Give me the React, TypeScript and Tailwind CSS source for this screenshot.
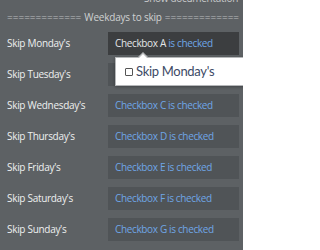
import React from "react";

const rows = [
  { label: "Skip Monday's", letter: "A" },
  { label: "Skip Tuesday's", letter: "B" },
  { label: "Skip Wednesday's", letter: "C" },
  { label: "Skip Thursday's", letter: "D" },
  { label: "Skip Friday's", letter: "E" },
  { label: "Skip Saturday's", letter: "F" },
  { label: "Skip Sunday's", letter: "G" },
];

export default function App() {
  return (
    <div
      className="relative w-[243px] h-[250px] overflow-hidden bg-[#5d6164]"
      style={{ fontFamily: "'Open Sans', sans-serif" }}
    >
      <div className="absolute right-[5px] top-[-9px] text-[10px] tracking-[-0.3px] text-[#c9cbcc] whitespace-nowrap">Show documentation</div>
      <div className="pt-[10px] pl-[7px] h-[32px] text-[10px] text-[#cfd1d2] flex items-start whitespace-nowrap overflow-hidden">
        <span className="text-[#b9bbbd]">=============</span>
        <span className="px-[3px] tracking-[-0.2px]">Weekdays to skip</span>
        <span className="text-[#b9bbbd]">=============</span>
      </div>
      <div className="flex flex-col gap-[8px]">
        {rows.map((r, i) => (
          <div key={r.letter} className="flex items-center h-[23px]">
            <div className="w-[108px] pl-[7px] text-[10px] tracking-[-0.3px] text-[#eef0f0] whitespace-nowrap">{r.label}</div>
            <div
              className={
                "w-[131px] h-[23px] pl-[7px] flex items-center text-[10px] tracking-[-0.35px] whitespace-nowrap " +
                (i === 0 ? "bg-[#3c3e40]" : "bg-[#505457]")
              }
            >
              {i === 0 ? (
                <span>
                  <span className="text-[#e4e6e8]">Checkbox A </span>
                  <span className="text-[#6fa6e6]">is checked</span>
                </span>
              ) : i === 1 ? null : (
                <span className="text-[#6fa6e6]">Checkbox {r.letter} is checked</span>
              )}
            </div>
          </div>
        ))}
      </div>
      <div className="absolute left-[115px] top-[57px] w-[140px] h-[29px] bg-white border border-[#b5b7b9] shadow-[0_1px_3px_rgba(0,0,0,0.3)] flex items-center pl-[9px]">
        <div className="w-[8px] h-[8px] border border-[#555] rounded-[1px] mr-[3px]" />
        <span className="text-[13px] tracking-[-0.3px] text-[#3d4a66]" style={{ fontFamily: "Lato, sans-serif" }}>Skip Monday's</span>
      </div>
      <div className="absolute left-[138px] top-[52px] w-0 h-0 border-l-[5px] border-r-[5px] border-b-[5px] border-l-transparent border-r-transparent border-b-[#b5b7b9]" />
      <div className="absolute left-[139px] top-[54px] w-0 h-0 border-l-[4px] border-r-[4px] border-b-[4px] border-l-transparent border-r-transparent border-b-white" />
    </div>
  );
}
